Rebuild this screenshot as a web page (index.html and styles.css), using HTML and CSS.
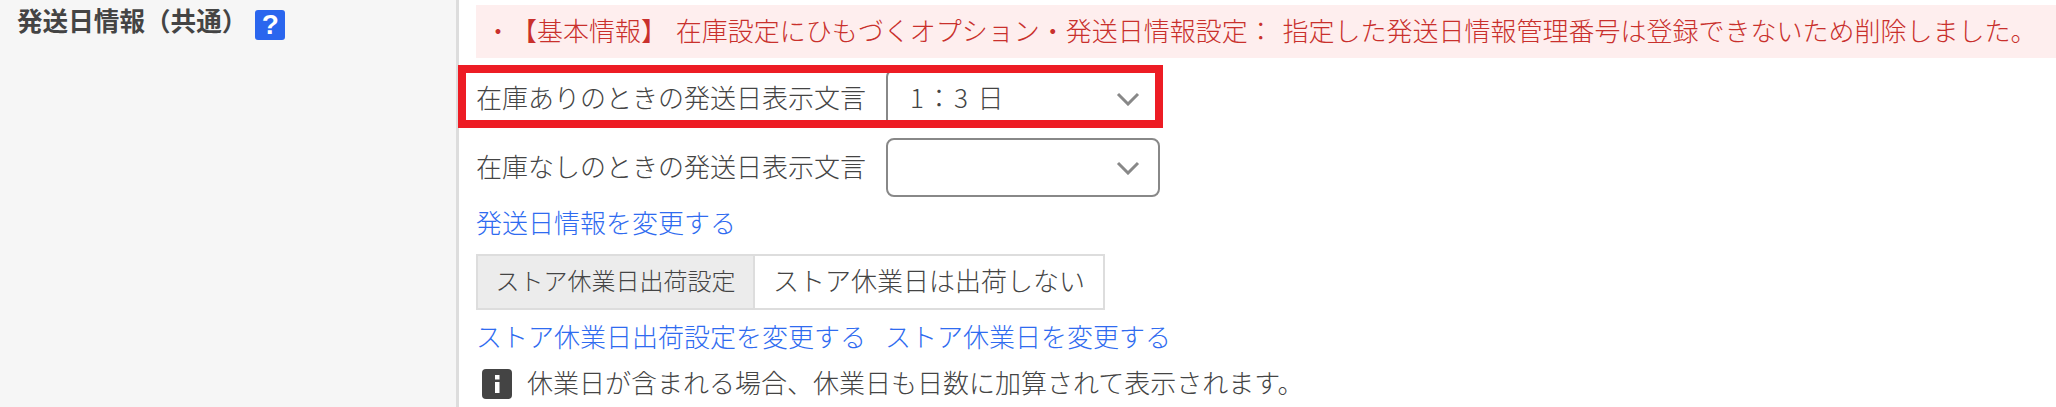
FILE: index.html
```html
<!DOCTYPE html>
<html lang="ja">
<head>
<meta charset="utf-8">
<title>発送日情報（共通）</title>
<link rel="stylesheet" href="styles.css">
</head>
<body>
<div class="row">
  <div class="head">
    <span class="head-title">発送日情報（共通）</span>
    <span class="help">?</span>
  </div>
  <div class="body">
    <div class="error"><span class="dot">・</span>【基本情報】 在庫設定にひもづくオプション・発送日情報設定： 指定した発送日情報管理番号は登録できないため削除しました。</div>
    <div class="field first">
      <span class="label">在庫ありのときの発送日表示文言</span>
      <div class="select"><span class="value">1：3 日</span>
        <svg class="chev" width="24" height="14" viewBox="0 0 24 14"><path d="M2 2l10 10L22 2" fill="none" stroke="#888" stroke-width="3"/></svg>
      </div>
      <div class="highlight"></div>
    </div>
    <div class="field second">
      <span class="label">在庫なしのときの発送日表示文言</span>
      <div class="select">
        <svg class="chev" width="24" height="14" viewBox="0 0 24 14"><path d="M2 2l10 10L22 2" fill="none" stroke="#888" stroke-width="3"/></svg>
      </div>
    </div>
    <div class="links link-one"><a href="#">発送日情報を変更する</a></div>
    <div class="setting">
      <div class="setting-key">ストア休業日出荷設定</div>
      <div class="setting-val">ストア休業日は出荷しない</div>
    </div>
    <div class="links link-two"><a href="#">ストア休業日出荷設定を変更する</a><a href="#">ストア休業日を変更する</a></div>
    <div class="note">
      <svg class="info" width="30" height="30" viewBox="0 0 30 30"><rect width="30" height="30" rx="4" fill="#444"/><rect x="13" y="6" width="4.5" height="4.5" fill="#fff"/><rect x="13" y="13" width="4.5" height="11" fill="#fff"/></svg>
      <span>休業日が含まれる場合、休業日も日数に加算されて表示されます。</span>
    </div>
  </div>
</div>
</body>
</html>
```

FILE: styles.css
```css
* { box-sizing: border-box; }
html, body { margin: 0; height: 407px; overflow: hidden; background: #fff; }
body { font-family: "Noto Sans CJK JP", "Noto Sans", sans-serif; font-size: 26px; font-weight: 300; color: #444; line-height: 38px; }
.row { display: flex; height: 407px; }
.head { width: 459px; flex: none; background: #f6f6f6; border-right: 3px solid #ddd; padding: 1px 0 0 17px; display: flex; align-items: flex-start; gap: 8px; }
.head-title { font-weight: 700; font-size: 25.6px; }
.help { margin-top: 9px; width: 30px; height: 30px; border-radius: 3px; background: #2a66ee; color: #fff; font: 700 28px/30px "Liberation Sans", sans-serif; text-align: center; }
.body { flex: 1; min-width: 0; padding: 5px 0 0 17px; }
.error { height: 53px; background: #feeeee; color: #c9302c; padding: 6px 0 0 9px; white-space: nowrap; overflow: hidden; word-spacing: 3px; }
.dot { margin-right: 13px; }
.field { position: relative; display: flex; align-items: center; }
.field.first { margin-top: 11px; height: 59px; }
.field.second { margin-top: 10px; height: 59px; }
.label { width: 410px; flex: none; padding-bottom: 4px; }
.select { position: relative; width: 274px; height: 59px; border: 2px solid #888; border-radius: 8px; padding: 0 0 4px 22px; display: flex; align-items: center; color: #444; }
.value { letter-spacing: 2px; }
.chev { position: absolute; right: 18px; top: 21px; }
.highlight { position: absolute; left: -18px; top: -4px; width: 705px; height: 63px; border: 8px solid #ed1c24; pointer-events: none; }
a { color: #2f6bf0; text-decoration: none; }
.links { white-space: nowrap; }
.link-one { margin-top: 6px; }
.link-two { margin-top: 7px; display: flex; gap: 19px; }
.setting { display: flex; width: 629px; height: 56px; margin-top: 13px; border: 2px solid #ddd; align-items: stretch; }
.setting-key { width: 277px; background: #ececec; border-right: 2px solid #ddd; display: flex; align-items: center; justify-content: center; font-size: 24px; padding-bottom: 4px; }
.setting-val { flex: 1; display: flex; align-items: center; justify-content: center; padding-bottom: 4px; }
.note { display: flex; align-items: center; gap: 15px; margin-top: 11px; padding-left: 6px; }
.note span { margin-top: -3px; }
.info { flex: none; }
```
